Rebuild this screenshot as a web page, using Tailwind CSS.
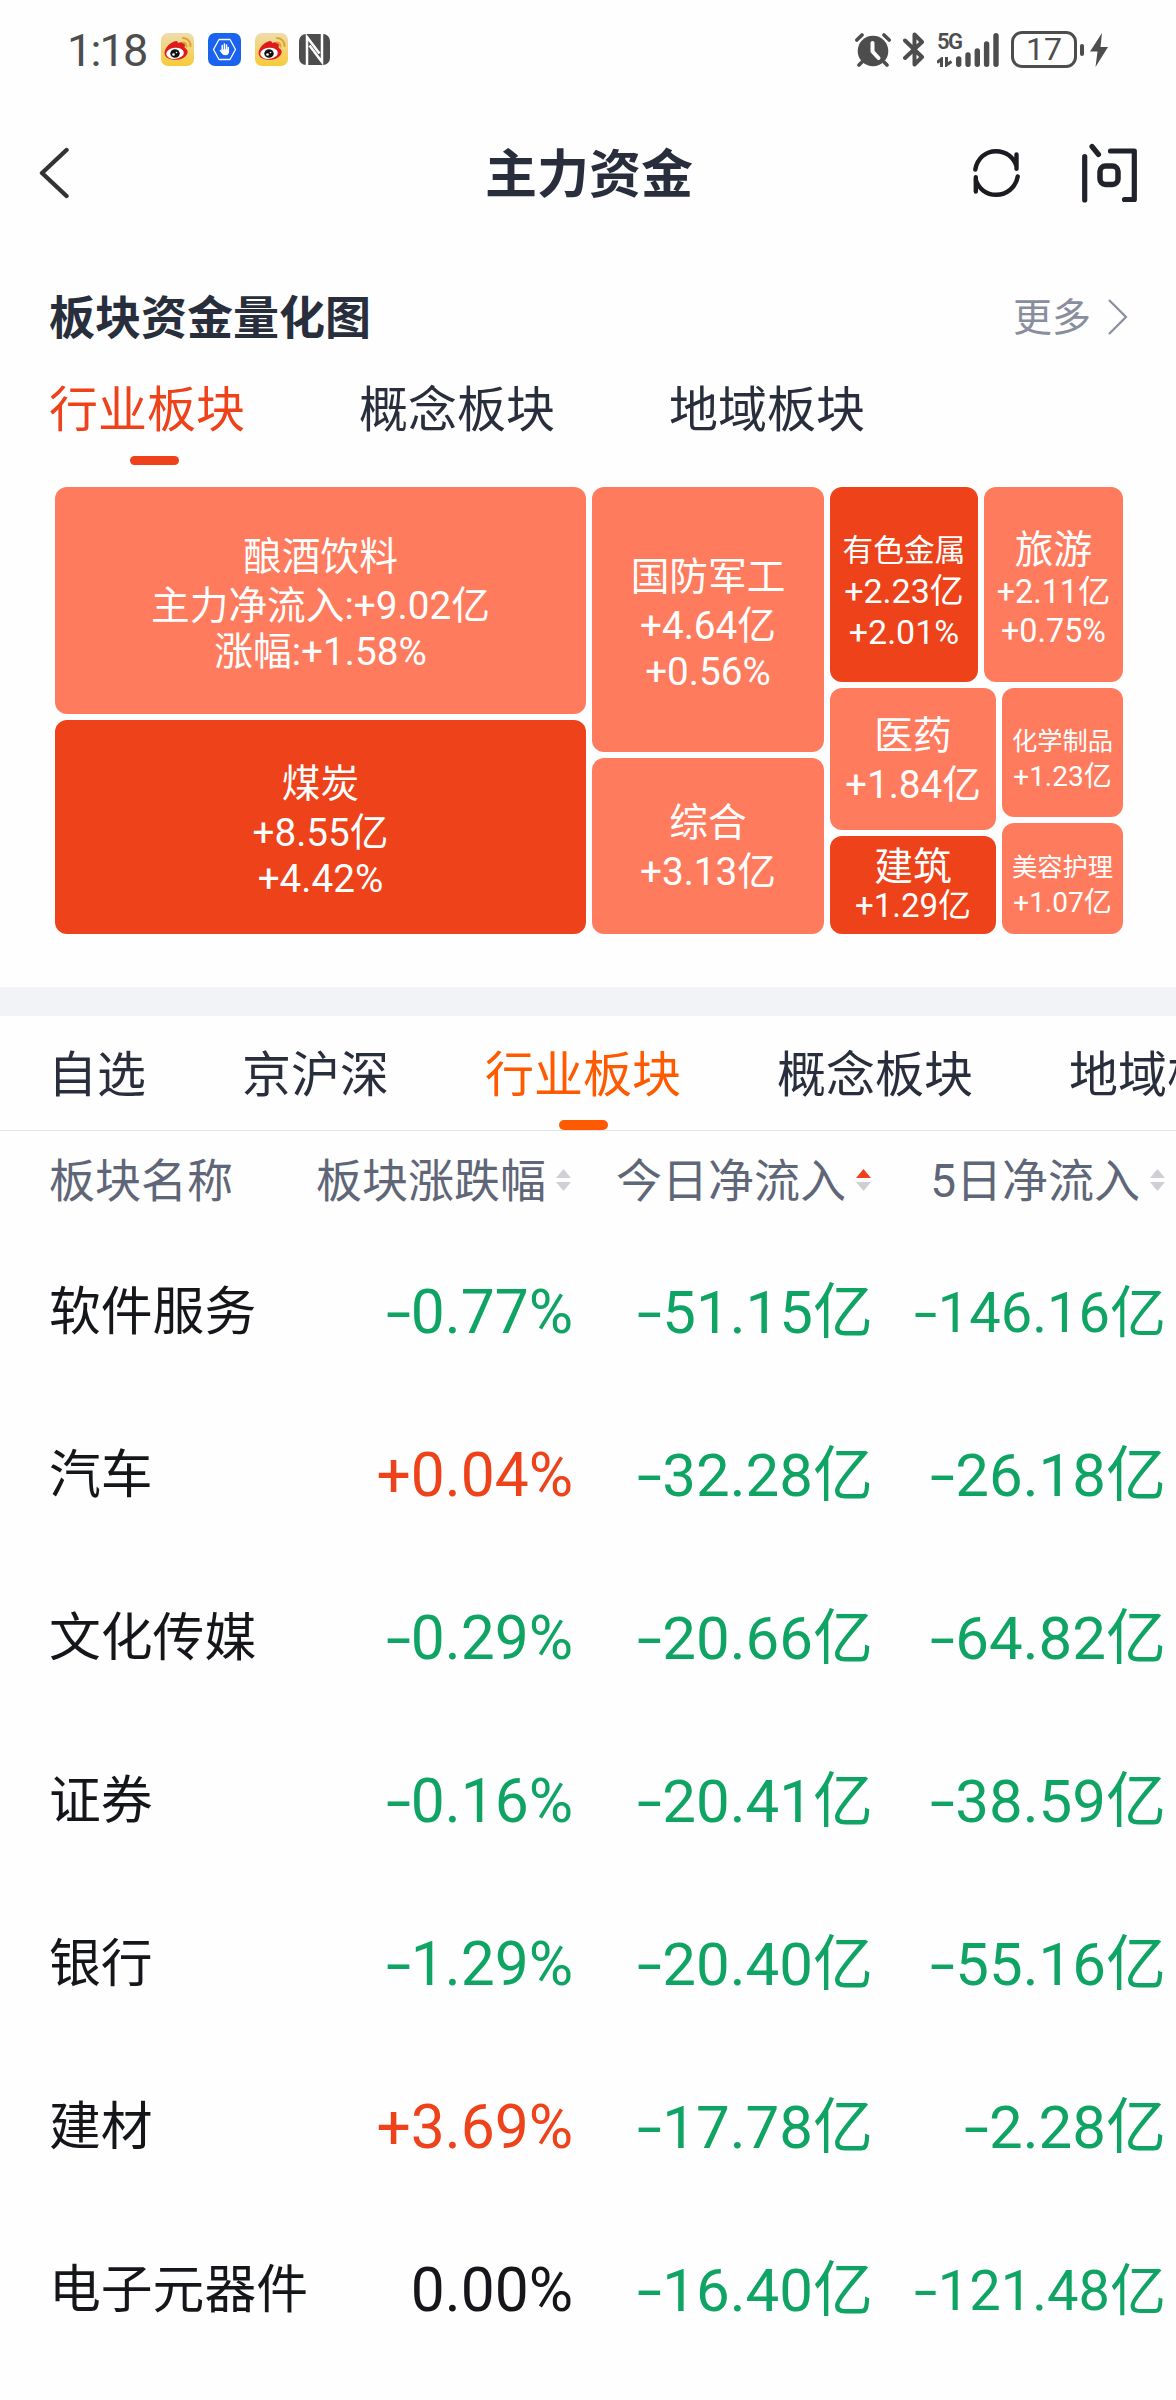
<!DOCTYPE html>
<html lang="zh-CN">
<head>
    <meta charset="UTF-8">
    <meta name="viewport" content="width=device-width, initial-scale=1.0">
    <title>主力资金</title>
    <script src="https://cdn.jsdelivr.net/npm/@tailwindcss/browser@4"></script>
</head>
<body class="bg-[#fefefe] text-[#282e3c] font-[Roboto,'Noto_Sans_CJK_SC',sans-serif] w-[1176px] h-[2400px] overflow-hidden whitespace-nowrap">

    <!-- Shared icons -->
    <svg class="absolute w-0 h-0">
        <defs>
            <linearGradient id="gold" x1="0" y1="0" x2="0" y2="1">
                <stop offset="0" stop-color="#eedcae"/>
                <stop offset="1" stop-color="#f7cb38"/>
            </linearGradient>
        </defs>
        <symbol id="weibo" viewBox="0 0 33 33">
            <rect width="33" height="33" rx="7" fill="url(#gold)"/>
            <path d="M13 8.500c3-1.500 4 0 4 1.500 3-1.500 7-1 7 2 0 1-1 2 0 3 3 1.500 3.500 4.500 1.500 7-3 4.500-9.500 5.500-14.500 4.500C5 25.500 2.500 22 4 17.500c1.500-4 5-7.500 9-9z" fill="#dd1a1c"/>
            <ellipse cx="14" cy="20.300" rx="8.800" ry="5.600" fill="#fff" transform="rotate(-6 14 20)"/>
            <ellipse cx="14" cy="20.500" rx="4.700" ry="4.300" fill="#111"/>
            <circle cx="12.500" cy="21.500" r="1.300" fill="#fff"/>
            <circle cx="15.500" cy="19.500" r=".8" fill="#fff"/>
            <path d="M22 5a7.500 7.500 0 0 1 7.500 8M22 9.500a4 4 0 0 1 3.500 4" fill="none" stroke="#e5a02c" stroke-width="2" stroke-linecap="round"/>
        </symbol>
        <symbol id="sort" viewBox="0 0 15 22">
            <path d="M7.500 0 15 9H0z" fill="#cfd0d6"/>
            <path d="M7.500 22 15 13H0z" fill="#cfd0d6"/>
        </symbol>
        <symbol id="sort-up" viewBox="0 0 15 22">
            <path d="M7.500 0 15 9H0z" fill="#ee421a"/>
            <path d="M7.500 22 15 13H0z" fill="#cfd0d6"/>
        </symbol>
    </svg>

    <!-- Status bar -->
    <div class="h-[99px] flex items-center justify-between pl-[67px] pr-[68px] text-[#4d4d4d]">
        <div class="flex items-center">
            <span class="w-[94px] text-[45px] leading-[44px] tracking-[-1.8px] pt-[2px]">1:18</span>
            <svg class="w-[33px] h-[33px]"><use href="#weibo"/></svg>
            <svg class="w-[33px] h-[33px] ml-[14px]" viewBox="0 0 33 33">
                <rect width="33" height="33" rx="7" fill="#1a63ee"/>
                <path d="M11 6.500h11l5.500 10L22 26.500H11L5.500 16.500z" fill="none" stroke="#fff" stroke-width="1.300" stroke-linejoin="round"/>
                <path d="M14.200 18v-5.500M16.400 17v-6M18.500 17v-5M20.300 18v-3.500" stroke="#fff" stroke-width="1.500" stroke-linecap="round"/>
                <path d="M13.500 16.500h7.500v2.500c0 2-1.200 3.200-3.200 3.200-2.200 0-3.300-.7-4.300-2.200l-2-2.600.8-.6 1.200 1z" fill="#fff"/>
            </svg>
            <svg class="w-[33px] h-[33px] ml-[14px]"><use href="#weibo"/></svg>
            <svg class="w-[31px] h-[31px] ml-[11px]" viewBox="0 0 31 31">
                <rect width="31" height="31" rx="7" fill="#4d4d4d"/>
                <path d="M8 31V3L20.500 19.500M23 0v28L10.500 11.500" fill="none" stroke="#fff" stroke-width="2.500"/>
            </svg>
        </div>
        <div class="flex items-center">
            <svg class="w-[36px] h-[34px]" viewBox="0 0 36 34">
                <circle cx="18" cy="18" r="15.300" fill="#4d4d4d"/>
                <path d="M1.800 7 7 2M34.200 7 29 2M7 29l-3 3M29 29l3 3" stroke="#4d4d4d" stroke-width="3.600" stroke-linecap="round"/>
                <path d="M17.500 10v8.500l6 6.500" fill="none" stroke="#fff" stroke-width="4" stroke-linecap="round" stroke-linejoin="round"/>
            </svg>
            <svg class="w-[22px] h-[35px] ml-[12px]" viewBox="0 0 22 35">
                <path d="M2 8.500 19 25l-7.500 7.500V22M11.500 13V2.500L19 10 2 26" fill="none" stroke="#4d4d4d" stroke-width="4" stroke-linejoin="round" stroke-linecap="round"/>
            </svg>
            <div class="flex ml-[12px] h-[34px]">
                <div class="flex flex-col justify-between w-[18px]">
                    <span class="font-semibold text-[22px] leading-[17px] tracking-[-1.5px]">5G</span>
                    <svg class="w-[15px] h-[10px]" viewBox="0 0 15 10">
                        <path d="M4.500 10V2L0 5.500M9.500 0v8l5-3.500" fill="none" stroke="#4d4d4d" stroke-width="3"/>
                    </svg>
                </div>
                <svg class="w-[44px] h-[34px]" viewBox="0 0 44 34">
                    <path d="M3.700 26v5.200M13 22v9.200M22.300 18v13.200M31.600 11v20.200M41 2.700v28.500" stroke="#4d4d4d" stroke-width="5.400" stroke-linecap="round"/>
                </svg>
            </div>
            <div class="ml-[12px] w-[66px] h-[37px] border-[3px] border-[#4d4d4d] rounded-[11px] flex items-center justify-center">
                <span class="text-[32px] leading-[31px]">17</span>
            </div>
            <div class="ml-[3px] w-[4px] h-[12px] rounded-full bg-[#4d4d4d]"></div>
            <svg class="ml-[6px] w-[18px] h-[34px]" viewBox="0 0 18 34">
                <path d="M12 0 0 18.500h7.500L5.500 34 18 14h-7.500z" fill="#4d4d4d"/>
            </svg>
        </div>
    </div>

    <!-- Nav bar -->
    <header class="h-[148px] grid grid-cols-3 items-center pl-[38px] pr-[38px]">
        <svg class="w-[32px] h-[52px]" viewBox="0 0 32 52">
            <path d="M28.500 3 4 26l24.500 23" fill="none" stroke="#333" stroke-width="4.400" stroke-linecap="round" stroke-linejoin="round"/>
        </svg>
        <h1 class="text-[52px] leading-[52px] font-bold text-center pt-[5px] pl-[2px]">主力资金</h1>
        <div class="flex items-center justify-end gap-[61px]">
            <svg class="w-[47px] h-[48px]" viewBox="0 0 47 48">
                <path d="M2.300 20.500C4.300 9.500 12.500 2.200 23 2.200c10 0 17.500 6 20.500 15M44.700 27.500c-2 11-11 18.300-21.500 18.300-10 0-17.500-6-20.500-15M43.500 5.500v14.200M2.800 28.300v14.200" fill="none" stroke="#1a1c20" stroke-width="4.400" stroke-linecap="round" stroke-linejoin="round"/>
            </svg>
            <svg class="w-[57px] h-[60px]" viewBox="0 0 57 60">
                <path d="M3.700 13.500v43.500M11 3.500l6.500 8M29.500 8h23.800v48.500H43.500" fill="none" stroke="#20242a" stroke-width="5.200" stroke-linecap="round" stroke-linejoin="round"/>
                <rect x="19" y="23" width="18" height="18.500" rx="5.500" fill="none" stroke="#20242a" stroke-width="5.500"/>
            </svg>
        </div>
    </header>

    <!-- Section heading -->
    <div class="h-[139px] flex items-center justify-between pl-[49px] pr-[48px]">
        <h2 class="text-[46px] leading-[46px] font-bold pt-[3px]">板块资金量化图</h2>
        <a class="flex items-center gap-[16px] text-[#888e9d]">
            <span class="text-[39px] leading-[40px] pt-[3px]">更多</span>
            <svg class="w-[21px] h-[38px]" viewBox="0 0 21 38">
                <path d="m2 2 17 17L2 36" fill="none" stroke="#888e9d" stroke-width="2.200"/>
            </svg>
        </a>
    </div>

    <!-- Treemap tabs -->
    <div class="flex pl-[49px] h-[79px] text-[49px] leading-[49px]">
        <div class="w-[310px] text-[#ee421a]">
            <div class="h-[70px]">行业板块</div>
            <div class="ml-[81px] w-[49px] h-[9px] rounded-[5px] bg-[#ee421a]"></div>
        </div>
        <div class="w-[310px]">概念板块</div>
        <div class="w-[310px]">地域板块</div>
    </div>

    <!-- Treemap -->
    <div class="mt-[22px] ml-[55px] w-[1068px] h-[447px] flex gap-[6px] text-white text-center">
        <div class="w-[531px] flex flex-col gap-[6px]">
            <div class="h-[227px] rounded-[12px] bg-[#ff7b5e] pt-[43px] text-[38.7px] leading-[46px]">
                <div class="leading-[53px]">酿酒饮料</div>
                <div>主力净流入:+9.02亿</div>
                <div>涨幅:+1.58%</div>
            </div>
            <div class="flex-1 rounded-[12px] bg-[#ee421a] pt-[37px] text-[38.7px] leading-[46px]">
                <div class="leading-[53px]">煤炭</div>
                <div>+8.55亿</div>
                <div>+4.42%</div>
            </div>
        </div>
        <div class="w-[232px] flex flex-col gap-[6px]">
            <div class="h-[265px] rounded-[12px] bg-[#ff7b5e] pt-[63px] text-[38.7px] leading-[46px]">
                <div class="leading-[53px]">国防军工</div>
                <div>+4.64亿</div>
                <div>+0.56%</div>
            </div>
            <div class="flex-1 rounded-[12px] bg-[#ff7b5e] pt-[38px] text-[38.7px] leading-[46px]">
                <div class="leading-[53px]">综合</div>
                <div>+3.13亿</div>
            </div>
        </div>
        <div class="flex-1 flex flex-col gap-[6px]">
            <div class="h-[195px] flex gap-[6px]">
                <div class="w-[148px] rounded-[12px] bg-[#ee421a] pt-[43px] text-[34px] leading-[41px]">
                    <div class="text-[30.7px]">有色金属</div>
                    <div>+2.23亿</div>
                    <div>+2.01%</div>
                </div>
                <div class="flex-1 rounded-[12px] bg-[#ff7b5e] pt-[39px] text-[32.3px] leading-[39px]">
                    <div class="text-[38.7px] leading-[47px]">旅游</div>
                    <div>+2.11亿</div>
                    <div>+0.75%</div>
                </div>
            </div>
            <div class="flex-1 flex gap-[6px]">
                <div class="w-[166px] flex flex-col gap-[6px]">
                    <div class="h-[142px] rounded-[12px] bg-[#ff7b5e] pt-[21px] text-[38.7px] leading-[46px]">
                        <div class="leading-[53px]">医药</div>
                        <div>+1.84亿</div>
                    </div>
                    <div class="flex-1 rounded-[12px] bg-[#ee421a] pt-[9px] text-[33px] leading-[34px]">
                        <div class="text-[38.7px] leading-[44px]">建筑</div>
                        <div>+1.29亿</div>
                    </div>
                </div>
                <div class="flex-1 flex flex-col gap-[6px]">
                    <div class="h-[129px] rounded-[12px] bg-[#ff7b5e] pt-[36px] text-[28px] leading-[35px]">
                        <div class="text-[25.3px]">化学制品</div>
                        <div>+1.23亿</div>
                    </div>
                    <div class="flex-1 rounded-[12px] bg-[#ff7b5e] pt-[27px] text-[28px] leading-[35px]">
                        <div class="text-[25.3px]">美容护理</div>
                        <div>+1.07亿</div>
                    </div>
                </div>
            </div>
        </div>
    </div>

    <div class="mt-[53px] h-[29px] bg-[#f2f3f7]"></div>

    <!-- List tabs -->
    <div class="h-[115px] flex gap-[96px] pl-[48px] overflow-hidden border-b border-[#e4e5e8] text-[49px] leading-[119px]">
        <div class="shrink-0">自选</div>
        <div class="shrink-0">京沪深</div>
        <div class="shrink-0 flex flex-col items-center text-[#ff5a00]">
            <div class="h-[104px]">行业板块</div>
            <div class="w-[49px] h-[10px] rounded-[5px] bg-[#ff5a00]"></div>
        </div>
        <div class="shrink-0">概念板块</div>
        <div class="shrink-0">地域板块</div>
    </div>

    <!-- List header -->
    <div class="h-[100px] grid grid-cols-[200px_322px_300px_294px] pl-[49px] text-[46px] leading-[101px] text-[#5e6678]">
        <div>板块名称</div>
        <div class="flex justify-end">板块涨跌幅<svg class="w-[15px] h-[22px] mt-[38px] ml-[10px]"><use href="#sort"/></svg></div>
        <div class="flex justify-end">今日净流入<svg class="w-[15px] h-[22px] mt-[38px] ml-[10px]"><use href="#sort-up"/></svg></div>
        <div class="flex justify-end">5日净流入<svg class="w-[15px] h-[22px] mt-[38px] ml-[10px]"><use href="#sort"/></svg></div>
    </div>

    <!-- List rows -->
    <div id="rows" class="pl-[49px] text-[60px] leading-[164px]"></div>

    <script>
        const rows = [
            ['软件服务', '-0.77%', '-51.15亿', '-146.16亿'],
            ['汽车', '+0.04%', '-32.28亿', '-26.18亿'],
            ['文化传媒', '-0.29%', '-20.66亿', '-64.82亿'],
            ['证券', '-0.16%', '-20.41亿', '-38.59亿'],
            ['银行', '-1.29%', '-20.40亿', '-55.16亿'],
            ['建材', '+3.69%', '-17.78亿', '-2.28亿'],
            ['电子元器件', '0.00%', '-16.40亿', '-121.48亿']
        ];

        // red for gains, green for losses, black for no change
        function color(value) {
            if (value[0] === '+') return 'text-[#ee421a]';
            if (value[0] === '-') return 'text-[#10a464]';
            return 'text-[#14161a]';
        }

        // widen the minus sign so it lines up with the plus
        function format(value) {
            return value.replace('-', '<span class="inline-block w-[25px] text-center scale-x-150">-</span>');
        }

        // amounts over 100亿 get a smaller size to stay inside the column
        document.getElementById('rows').innerHTML = rows.map(([name, change, today, fiveDay]) => `
            <div class="h-[163px] grid grid-cols-[260px_264px_300px_293px] text-right">
                <div class="text-left text-[51.8px] text-[#14161a]">${name}</div>
                <div class="text-[60.5px] ${color(change)}">${format(change)}</div>
                <div class="${color(today)}">${format(today)}</div>
                <div class="${fiveDay.length > 7 ? 'text-[56px]' : 'text-[60px]'} ${color(fiveDay)}">${format(fiveDay)}</div>
            </div>`).join('');
    </script>

</body>
</html>
